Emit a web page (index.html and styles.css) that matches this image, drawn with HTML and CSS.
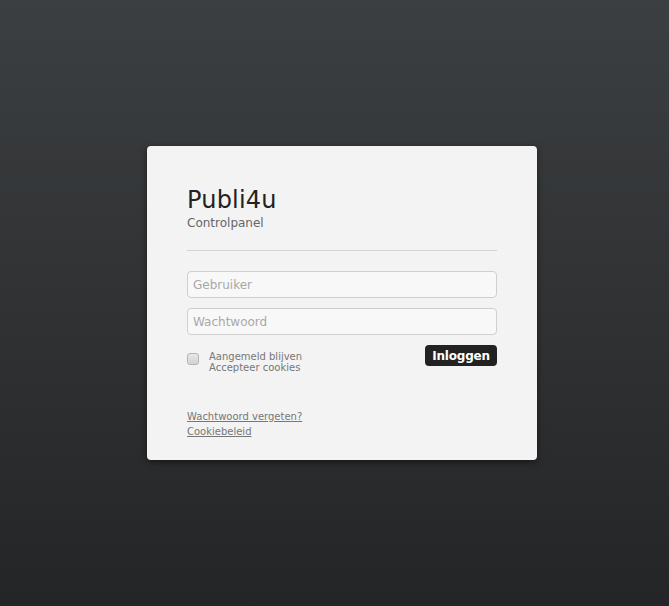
FILE: index.html
```html
<!DOCTYPE html>
<html lang="nl">
  <head>
    <meta charset="UTF-8" />
    <meta name="viewport" content="width=device-width, initial-scale=1.0" />
    <title>Publi4u - Controlpanel</title>
    <link rel="stylesheet" href="styles.css">
  </head>
  <body>
    <div class="login-box">
      <h1>Publi4u</h1>
      <p class="subtitle">Controlpanel</p>
      <hr />
      <form id="loginForm" action="/login" method="POST">
        <input type="text" name="user" placeholder="Gebruiker" />
        <input type="password" name="pass" placeholder="Wachtwoord" />
        <div class="form-row">
          <label class="remember">
            <input type="checkbox" name="remember" />
            <span>Aangemeld blijven<br />Accepteer cookies</span>
          </label>
          <button type="submit">Inloggen</button>
        </div>
      </form>
      <div class="links">
        <a href="#">Wachtwoord vergeten?</a>
        <a href="#">Cookiebeleid</a>
      </div>
    </div>
  </body>
</html>
```

FILE: styles.css
```css
html {
  height: 100%;
}
body {
  margin: 0;
  min-height: 100%;
  font-family: "DejaVu Sans", Verdana, sans-serif;
  background: linear-gradient(to bottom, #3c3f41 0%, #242527 100%);
  display: flex;
  justify-content: center;
  padding: 146px 0 0 15px;
  box-sizing: border-box;
}

.login-box {
  width: 390px;
  height: 314px;
  box-sizing: border-box;
  padding: 40px 40px 0 40px;
  background-color: #f3f3f3;
  border-radius: 4px;
  box-shadow: 0 2px 6px rgba(0, 0, 0, 0.5);
}

h1 {
  margin: 0;
  font-size: 24px;
  font-weight: normal;
  letter-spacing: 0.2px;
  color: #222;
  line-height: 28px;
}

.subtitle {
  margin: 2px 0 0 0;
  font-size: 12px;
  color: #666;
}

hr {
  border: 0;
  border-top: 1px solid #d3d3d3;
  margin: 20px 0 20px 0;
}

input[type="text"],
input[type="password"] {
  display: block;
  width: 100%;
  height: 27px;
  box-sizing: border-box;
  margin: 0 0 10px 0;
  padding: 0 5px;
  font-family: "DejaVu Sans", Verdana, sans-serif;
  font-size: 12px;
  background-color: #f8f8f8;
  border: 1px solid #cfcfcf;
  border-radius: 4px;
}

input::placeholder {
  color: #a8a8a8;
}

.form-row {
  display: flex;
  justify-content: space-between;
  align-items: flex-start;
}

.remember {
  display: flex;
  align-items: flex-start;
  font-size: 10px;
  color: #777;
  line-height: 11px;
  padding-top: 6px;
}

.remember input {
  appearance: none;
  -webkit-appearance: none;
  margin: 2px 10px 0 0;
  width: 12px;
  height: 12px;
  border: 1px solid #b5b5b5;
  border-radius: 3px;
  background: linear-gradient(to bottom, #e8e8e8, #d2d2d2);
}

button {
  width: 72px;
  height: 21px;
  padding: 0;
  font-family: "DejaVu Sans", Verdana, sans-serif;
  font-size: 12px;
  font-weight: bold;
  letter-spacing: -0.2px;
  color: #fff;
  background-color: #222;
  border: 0;
  border-radius: 4px;
  cursor: pointer;
}

.links {
  margin-top: 38px;
  display: flex;
  flex-direction: column;
  align-items: flex-start;
  gap: 4px;
}

.links a {
  font-size: 10px;
  color: #777;
}
```
